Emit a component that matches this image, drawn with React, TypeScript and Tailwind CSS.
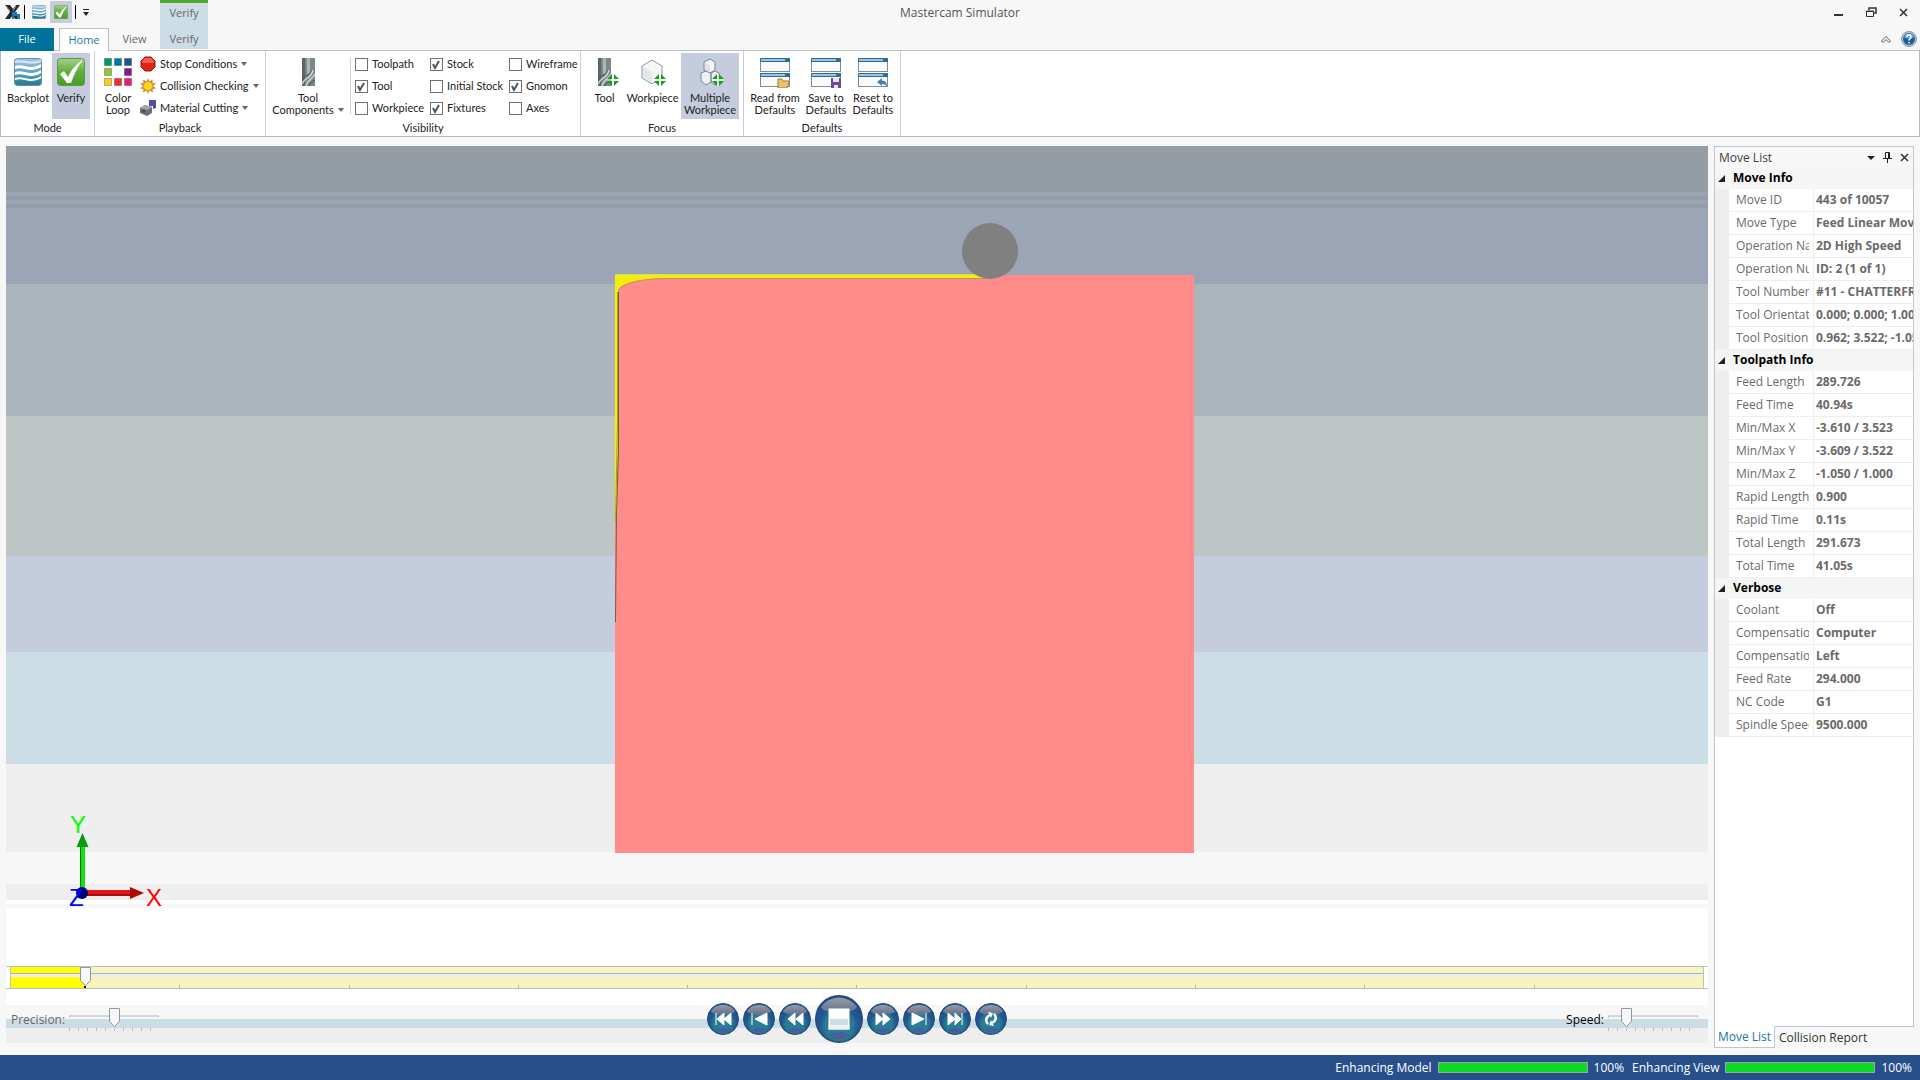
import { useState } from "react";
import type { ReactNode } from "react";

interface Property {
  name: string;
  value: string;
}

interface PropertyGroup {
  title: string;
  rows: Property[];
}

const groups: PropertyGroup[] = [
  {
    title: "Move Info",
    rows: [
      { name: "Move ID", value: "443 of 10057" },
      { name: "Move Type", value: "Feed Linear Move" },
      { name: "Operation Name", value: "2D High Speed" },
      { name: "Operation Number", value: "ID: 2 (1 of 1)" },
      { name: "Tool Number", value: "#11 - CHATTERFREE" },
      { name: "Tool Orientation", value: "0.000; 0.000; 1.000" },
      { name: "Tool Position", value: "0.962; 3.522; -1.050" },
    ],
  },
  {
    title: "Toolpath Info",
    rows: [
      { name: "Feed Length", value: "289.726" },
      { name: "Feed Time", value: "40.94s" },
      { name: "Min/Max X", value: "-3.610 / 3.523" },
      { name: "Min/Max Y", value: "-3.609 / 3.522" },
      { name: "Min/Max Z", value: "-1.050 / 1.000" },
      { name: "Rapid Length", value: "0.900" },
      { name: "Rapid Time", value: "0.11s" },
      { name: "Total Length", value: "291.673" },
      { name: "Total Time", value: "41.05s" },
    ],
  },
  {
    title: "Verbose",
    rows: [
      { name: "Coolant", value: "Off" },
      { name: "Compensation Type", value: "Computer" },
      { name: "Compensation Side", value: "Left" },
      { name: "Feed Rate", value: "294.000" },
      { name: "NC Code", value: "G1" },
      { name: "Spindle Speed", value: "9500.000" },
    ],
  },
];

const visibility = [
  { label: "Toolpath", on: false },
  { label: "Stock", on: true },
  { label: "Wireframe", on: false },
  { label: "Tool", on: true },
  { label: "Initial Stock", on: false },
  { label: "Gnomon", on: true },
  { label: "Workpiece", on: false },
  { label: "Fixtures", on: true },
  { label: "Axes", on: false },
];

// [top, height, color] of each strip behind the model
const bands: [number, number, string][] = [
  [0, 46, "#949ca4"],
  [46, 4, "#9ca5b5"],
  [50, 4, "#949ca4"],
  [54, 4, "#9ca5b5"],
  [58, 4, "#949ca4"],
  [62, 76, "#9ca5b5"],
  [138, 132, "#adb5bc"],
  [270, 140, "#bdc5c5"],
  [410, 96, "#c5ccdd"],
  [506, 112, "#cddde5"],
  [618, 88, "#eeeeee"],
  [706, 32, "#f7f7f7"],
  [738, 16, "#eeeeee"],
  [754, 4, "#ffffff"],
  [758, 4, "#f7f7f7"],
  [762, 97, "#ffffff"],
  [859, 14, "#f7f7f7"],
  [873, 9, "#cddde5"],
  [882, 15, "#eeeeee"],
];

const TOTAL_MOVES = 10057;

// ---------------- Icons ----------------

function Caret() {
  return (
    <svg width="6" height="4" viewBox="0 0 6 4" className="shrink-0">
      <path d="M0 0h6L3 4z" fill="#666" />
    </svg>
  );
}

function BackplotIcon({ className }: { className: string }) {
  return (
    <svg viewBox="0 0 28 28" className={className}>
      <defs>
        <linearGradient id="backplot" x1="0" y1="0" x2="0" y2="1">
          <stop offset="0" stopColor="#a9c4ea" />
          <stop offset="0.5" stopColor="#5aa5bd" />
          <stop offset="1" stopColor="#22788f" />
        </linearGradient>
      </defs>
      <rect x="0.5" y="0.5" width="27" height="27" rx="3" fill="url(#backplot)" stroke="#6b8fa8" />
      <path d="M1 8c8-3 15 5 26-2v3c-11 7-18-1-26 2z" fill="#fff" />
      <path d="M1 14c8-3 15 5 26-2v3c-11 7-18-1-26 2z" fill="#fff" />
      <path d="M1 20c8-3 15 5 26-2v2c-11 7-18-1-26 2z" fill="#fff" />
      <path d="M1 3c8-2 15 3 26-1v2c-11 4-18-1-26 1z" fill="#dbe7f7" />
    </svg>
  );
}

function VerifyIcon({ className }: { className: string }) {
  return (
    <svg viewBox="0 0 28 28" className={className}>
      <defs>
        <linearGradient id="verify" x1="0" y1="0" x2="0" y2="1">
          <stop offset="0" stopColor="#a5cf8e" />
          <stop offset="0.5" stopColor="#5fae3c" />
          <stop offset="1" stopColor="#4a9c27" />
        </linearGradient>
      </defs>
      <rect x="0.5" y="0.5" width="27" height="27" rx="3" fill="url(#verify)" stroke="#5b9a45" />
      <path d="M3 16l4-3 4 6C14 12 19 6 26 2c-5 6-9 14-12 23h-4z" fill="#fff" />
    </svg>
  );
}

function ColorLoopIcon() {
  const cells = [
    [0, 0, "#009a5b"],
    [10, 0, "#0078a8"],
    [20, 0, "#1f4f96"],
    [0, 10, "#8cc63f"],
    [20, 10, "#85168c"],
    [0, 20, "#f5cf1d"],
    [10, 20, "#ec2e2e"],
    [20, 20, "#ea1a70"],
  ] as const;
  return (
    <svg viewBox="0 0 28 28" className="size-7">
      {cells.map(([x, y, fill]) => (
        <rect key={fill} x={x + 0.5} y={y + 0.5} width="7" height="7" fill={fill} stroke="#000" strokeOpacity="0.25" />
      ))}
    </svg>
  );
}

function StopIcon() {
  return (
    <svg viewBox="0 0 16 16" className="size-4">
      <path d="M5 1h6l4 4v6l-4 4H5l-4-4V5z" fill="#e02313" stroke="#8e1f14" />
      <path d="M5 2h6l3 3v2H2V5z" fill="#f0604c" />
    </svg>
  );
}

function CollisionIcon() {
  return (
    <svg viewBox="0 0 16 16" className="size-4">
      <path
        d="M8 0l1.500 3.600L12.500 1.500l0 3.500L16 5.500 13 8l3 2.500-3.500.5.500 3.500-3.500-2L8 16l-1.500-3.500-3.500 2 .5-3.500L0 10.500 3 8 0 5.500l3.500-.5L3 1.500l3.500 2.100z"
        fill="#c08a4a"
      />
      <circle cx="8" cy="8" r="4.500" fill="#fcd716" stroke="#f09b1b" />
    </svg>
  );
}

function MaterialIcon() {
  return (
    <svg viewBox="0 0 16 16" className="size-4">
      <path d="M0 8l5-3 7 2v6l-5 3-7-3z" fill="#6b7072" />
      <path d="M0 8l5-3 7 2-5 3z" fill="#a3a8aa" />
      <circle cx="4" cy="11" r="1.500" fill="#44494b" />
      <path d="M9 0h7v8l-3 1V6H9z" fill="#514f9b" />
    </svg>
  );
}

function EndMill() {
  return (
    <>
      <rect x="0" y="0" width="13" height="28" fill="#7d8788" />
      <rect x="0" y="0" width="3" height="28" fill="#5b6567" />
      <rect x="5" y="0" width="3" height="16" fill="#adb6b6" />
      <path d="M0 26C3 18 9 22 11 12M4 28c2-7 6-6 9-12" fill="none" stroke="#ccd4d4" strokeWidth="1.500" />
      <path d="M0 21c3-4 7-3 9-8M7 28c1-3 3-4 6-6" fill="none" stroke="#465052" />
    </>
  );
}

function FocusMark() {
  return (
    <g transform="translate(9 16)">
      <path d="M5 0v5H0zM7 0v5h5zM0 7h5v5zM7 7h5l-5 5z" fill="#1d9a1a" />
      <path d="M6 0v12M0 6h12" stroke="#fff" />
    </g>
  );
}

function ToolComponentsIcon() {
  return (
    <svg viewBox="0 0 28 28" className="size-7">
      <g transform="translate(8 0)">
        <EndMill />
      </g>
    </svg>
  );
}

function FocusToolIcon() {
  return (
    <svg viewBox="0 0 28 28" className="size-7">
      <g transform="translate(7 0)">
        <EndMill />
        <FocusMark />
      </g>
    </svg>
  );
}

function WorkpieceIcon() {
  return (
    <svg viewBox="0 0 28 28" className="size-7">
      <path d="M3 8l10-6 10 6v12l-10 6-10-6z" fill="#f5f6f8" stroke="#8a96a5" />
      <path d="M4 9l9 5v11l-9-5z" fill="#e4e6ea" />
      <g transform="translate(6 0)">
        <FocusMark />
      </g>
    </svg>
  );
}

function MultipleIcon() {
  return (
    <svg viewBox="0 0 28 28" className="size-7">
      <path d="M5 15l5-2 5 2v9l-5 3-5-4zM15 15l4-2 4 2v9l-4 3-4-3z" fill="#eef0f3" stroke="#7b8797" />
      <path d="M8 4l6-3 5 3v8l-5 3-6-3z" fill="#f3f4f6" stroke="#7b8797" />
      <path d="M9 5l5 2v7l-5-2z" fill="#dfe2e7" />
      <g transform="translate(7 0)">
        <FocusMark />
      </g>
    </svg>
  );
}

function DefaultsIcon({ children }: { children: ReactNode }) {
  return (
    <svg viewBox="0 0 30 30" className="h-[30px] w-[30px] shrink-0">
      {[0, 15].map((y) => (
        <g key={y}>
          <rect x="0.5" y={y + 0.5} width="29" height="13" fill="#fafafa" stroke="#7f8c92" />
          <rect x="0" y={y} width="30" height="4" fill="#2c6f94" />
          <rect x="1" y={y + 1} width="24" height="2" fill="#9fc0ee" />
        </g>
      ))}
      {children}
    </svg>
  );
}

function AppLogo() {
  return (
    <svg viewBox="0 0 16 16" className="size-4">
      <path d="M0 1h5l3 4 3-4h4l-5 7 5 7h-5l-2-4-3 4H0l5-7z" fill="#23282b" />
      <path d="M1 2l4 5M11 2L8 7" stroke="#9aa4a8" />
      <path d="M7 8h5v2h3v5h-3v-3H9v3H7z" fill="#2378a8" />
    </svg>
  );
}

// ---------------- Ribbon parts ----------------

interface LargeButtonProps {
  icon: ReactNode;
  lines: string[];
  width: string;
  active?: boolean;
  menu?: boolean;
}

function LargeButton({ icon, lines, width, active, menu }: LargeButtonProps) {
  return (
    <button
      className={`flex h-[66px] shrink-0 flex-col items-center pt-[5px] leading-3 ${width} ${
        active ? "bg-[#c5ccdd]" : "hover:bg-[#e3e7ef]"
      }`}
    >
      <span className="mb-1.5 flex h-7 justify-center">{icon}</span>
      {lines.map((line, i) => (
        <span key={line} className="flex items-center gap-1 whitespace-nowrap">
          {line}
          {menu && i === lines.length - 1 && <Caret />}
        </span>
      ))}
    </button>
  );
}

function SmallButton({ icon, label }: { icon: ReactNode; label: string }) {
  return (
    <button className="flex h-[22px] items-center gap-1 whitespace-nowrap hover:bg-[#e3e7ef]">
      {icon}
      <span>{label}</span>
      <Caret />
    </button>
  );
}

function RibbonGroup({ title, width, children }: { title: string; width: string; children: ReactNode }) {
  return (
    <div className={`flex shrink-0 flex-col border-r border-[#c5ccdd] pt-0.5 ${width}`}>
      <div className="flex h-[66px] pl-1">{children}</div>
      <div className="h-[17px] text-center leading-[17px]">{title}</div>
    </div>
  );
}

function Check({ label, on }: { label: string; on: boolean }) {
  return (
    <label className="flex h-[22px] items-center gap-1 whitespace-nowrap">
      <span className="grid size-[13px] shrink-0">
        <input
          type="checkbox"
          defaultChecked={on}
          className="peer col-start-1 row-start-1 size-[13px] appearance-none border border-[#707070] bg-white"
        />
        <svg
          viewBox="0 0 13 13"
          className="pointer-events-none invisible col-start-1 row-start-1 size-[13px] peer-checked:visible"
        >
          <path d="M3 6l2 4 4-7" fill="none" stroke="#4d5654" strokeWidth="2" />
        </svg>
      </span>
      {label}
    </label>
  );
}

// ---------------- Sliders ----------------

function Thumb() {
  return (
    <svg width="11" height="19" viewBox="0 0 11 19">
      <path d="M0.500 0.500h10v13l-5 5-5-5z" fill="#f7f7f7" stroke="#8d979c" />
    </svg>
  );
}

interface SmallSliderProps {
  id: string;
  label: string;
  initial: number;
  color: string;
}

function SmallSlider({ id, label, initial, color }: SmallSliderProps) {
  const [value, setValue] = useState(initial);

  return (
    <div className={`flex items-center gap-1 pt-0.5 ${color}`}>
      <label htmlFor={id}>{label}</label>
      <div className="relative h-6 w-[90px]">
        <svg viewBox="0 0 90 24" className="size-full">
          <path d="M0 10V8h90v2" fill="none" stroke="#adb5bc" />
          {Array.from({ length: 11 }, (_, i) => (
            <path key={i} d={`M${i * 9 + 0.5} 19v4`} stroke="#b9c2c8" />
          ))}
        </svg>
        <div className="absolute top-0 -ml-[5px]" style={{ left: `${value * 10}%` }}>
          <Thumb />
        </div>
        <input
          id={id}
          type="range"
          min={0}
          max={10}
          value={value}
          onChange={(e) => setValue(Number(e.target.value))}
          className="absolute inset-0 w-full opacity-0"
        />
      </div>
    </div>
  );
}

function Timeline() {
  const [move, setMove] = useState(443);
  const done = (move / TOTAL_MOVES) * 100;

  return (
    <div className="relative h-[23px] border-y border-[#b8c0c4] bg-white px-1">
      <div className="relative h-full border-x border-[#c9c1a5] bg-[#f7f5bd]">
        <div className="h-full bg-[#ffff00]" style={{ width: `${done}%` }} />
        <div className="absolute inset-x-0 top-1.5 h-1 border-t border-[#adb5bc] bg-[#eeeeee]" />
        <div className="absolute inset-x-0 bottom-0 flex h-[3px]">
          {Array.from({ length: 10 }, (_, i) => (
            <span key={i} className="flex-1 border-l border-[#b5b5a5] first:border-0" />
          ))}
        </div>
        <div className="absolute top-0 -ml-1.5 flex flex-col items-center" style={{ left: `${done}%` }}>
          <Thumb />
          <span className="h-0.5 w-0.5 bg-black" />
        </div>
        <input
          type="range"
          aria-label="Move"
          min={0}
          max={TOTAL_MOVES}
          value={move}
          onChange={(e) => setMove(Number(e.target.value))}
          className="absolute inset-0 w-full opacity-0"
        />
      </div>
    </div>
  );
}

// ---------------- Playback ----------------

const transport = [
  { label: "Go to start", d: "M9 10v12M17 10l-7 6 7 6zM24 10l-7 6 7 6z" },
  { label: "Step back", d: "M9 10v12M24 10l-12 6 12 6z" },
  { label: "Rewind", d: "M16 10l-7 6 7 6zM24 10l-7 6 7 6z" },
  { label: "Stop", d: "" },
  { label: "Fast forward", d: "M9 10l7 6-7 6zM16 10l7 6-7 6z" },
  { label: "Step forward", d: "M23 10v12M9 10l12 6-12 6z" },
  { label: "Go to end", d: "M23 10v12M9 10l7 6-7 6zM16 10l6 6-6 6z" },
  { label: "Loop", d: "loop" },
];

function TransportButton({ label, d }: { label: string; d: string }) {
  const stop = label === "Stop";
  return (
    <button aria-label={label} className={`shrink-0 rounded-full ${stop ? "size-12" : "size-8"}`}>
      <svg viewBox="0 0 32 32" className="size-full">
        <defs>
          <radialGradient id="orb" cx="0.5" cy="0.65" r="0.55">
            <stop offset="0" stopColor="#27829a" />
            <stop offset="0.55" stopColor="#297b90" />
            <stop offset="0.75" stopColor="#22588f" />
            <stop offset="1" stopColor="#1c4f91" />
          </radialGradient>
          <linearGradient id="gloss" x1="0" y1="0" x2="0" y2="1">
            <stop offset="0" stopColor="#949ca4" />
            <stop offset="1" stopColor="#63708c" />
          </linearGradient>
        </defs>
        <circle cx="16" cy="16" r="15.500" fill="url(#orb)" stroke="#244b7c" />
        <path d="M4 8A14.500 14.500 0 0 1 28 8C26 13 6 13 4 8z" fill="url(#gloss)" />
        <path d="M9 27c4-3 10-3 14 0-4 3-10 3-14 0z" fill="#4a5c9c" />
        {stop && (
          <>
            <rect x="9" y="9" width="14" height="14" fill="#fff" />
            <rect x="10" y="16" width="12" height="4" fill="#cddde5" />
            <rect x="9" y="20" width="14" height="3" fill="#f0f0f0" />
          </>
        )}
        {d === "loop" && (
          <>
            <path d="M13 21c-3-3-2-7 2-9M19 11c3 3 2 7-2 9" fill="none" stroke="#fff" strokeWidth="2.500" />
            <path d="M13 9l5 1-2 5zM19 23l-5-1 2-5z" fill="#fff" />
          </>
        )}
        {!stop && d !== "loop" && <path d={d} fill="#fff" stroke="#fff" />}
      </svg>
    </button>
  );
}

// ---------------- Viewport ----------------

function Model() {
  return (
    <svg viewBox="0 0 1702 820" className="absolute inset-0 size-full">
      <rect x="609" y="129" width="579" height="578" fill="#ff8b8b" />
      {/* material still to be removed */}
      <path d="M609 128h376v4H660C632 133 613 137 612 145v150l-2 80h-1z" fill="#f2ee0a" />
      <path d="M609 128.500h376" stroke="#cfd884" />
      <path d="M985 132.500H660C634 133 616 137 613 145" fill="none" stroke="#b89a50" />
      <path d="M612.500 146v160l-2 60-1 110" fill="none" stroke="#7b5a30" />
      <path d="M611.500 146v130l-2 100" fill="none" stroke="#a9a305" />
      <circle cx="984" cy="105" r="28" fill="#808080" />
    </svg>
  );
}

function Gnomon() {
  return (
    <svg width="110" height="100" viewBox="0 0 110 100" className="absolute bottom-14 left-[58px]">
      <rect x="16" y="34" width="5" height="48" fill="#14e014" />
      <rect x="16" y="34" width="1" height="48" fill="#0a7a0a" />
      <path d="M18.500 23l6 14h-12z" fill="#0b9a0b" />
      <rect x="18" y="80" width="50" height="6" fill="#e01515" />
      <rect x="18" y="84" width="50" height="2" fill="#a80d0d" />
      <path d="M80 83l-14 6V77z" fill="#b30808" />
      <circle cx="18" cy="83" r="6" fill="#00007a" />
      <g fontFamily="Liberation Sans, sans-serif" fontSize="24">
        <text x="6" y="23" fill="#00ff00">Y</text>
        <text x="82" y="96" fill="#ff0000">X</text>
        <text x="5" y="96" fill="#0000ff">Z</text>
      </g>
    </svg>
  );
}

function Viewport() {
  return (
    <section className="relative flex min-w-0 flex-1 flex-col">
      <svg
        viewBox="0 0 100 897"
        preserveAspectRatio="none"
        shapeRendering="crispEdges"
        className="absolute inset-0 size-full"
      >
        {bands.map(([y, h, fill]) => (
          <rect key={y} y={y} width="100" height={h} fill={fill} />
        ))}
      </svg>
      <div className="relative min-h-80 flex-1">
        <Model />
        <Gnomon />
      </div>
      <Timeline />
      <div className="relative grid h-[54px] grid-cols-[1fr_auto_1fr] items-center pt-1.5 text-xs">
        <div className="pl-[5px]">
          <SmallSlider id="precision" label="Precision:" initial={5} color="text-[#666]" />
        </div>
        <div className="flex items-center gap-1">
          {transport.map((t) => (
            <TransportButton key={t.label} {...t} />
          ))}
        </div>
        <div className="flex justify-end pr-2.5">
          <SmallSlider id="speed" label="Speed:" initial={2} color="text-black" />
        </div>
      </div>
    </section>
  );
}

// ---------------- Move list ----------------

function MoveList() {
  return (
    <aside className="flex w-[200px] shrink-0 flex-col text-xs">
      <div className="flex-1 border border-b-0 border-[#bcc8d0] bg-white">
        <div className="flex h-[21px] items-center bg-[#f7f7f7] px-1 text-[#444]">
          <h2 className="flex-1">Move List</h2>
          <button aria-label="Window position" className="mr-2">
            <svg width="8" height="4" viewBox="0 0 8 4">
              <path d="M0 0h8L4 4z" fill="#222" />
            </svg>
          </button>
          <button aria-label="Auto hide" className="mr-2">
            <svg width="9" height="11" viewBox="0 0 9 11" fill="none" stroke="#222">
              <path d="M2.500 6V0.500h4V6M5.500 1v5M0 6.500h9M4.500 7v4" />
            </svg>
          </button>
          <button aria-label="Close panel">
            <svg width="9" height="9" viewBox="0 0 9 9">
              <path d="M1 1l7 7M8 1L1 8" stroke="#333" strokeWidth="1.500" />
            </svg>
          </button>
        </div>
        <table className="w-full table-fixed border-separate border-spacing-0">
          <colgroup>
            <col className="w-3.5" />
            <col className="w-[85px]" />
            <col />
          </colgroup>
          {groups.map((group) => (
            <tbody key={group.title}>
              <tr className="h-[21px] bg-[#f5f5f5]">
                <th colSpan={3} className="p-0 text-left align-top font-bold text-black">
                  <span className="flex items-center gap-2 pl-[3px] leading-5">
                    <svg width="7" height="7" viewBox="0 0 7 7">
                      <path d="M7 0v7H0z" fill="#222" />
                    </svg>
                    {group.title}
                  </span>
                </th>
              </tr>
              {group.rows.map((row, i) => (
                <tr key={i} className="h-[23px] text-[#6a6a6a]">
                  <td className="bg-[#eeeeee] p-0" />
                  <th
                    scope="row"
                    className="border-r border-b border-[#eeeeee] p-0 pr-1 pl-[7px] text-left font-normal"
                  >
                    <span className="block overflow-hidden whitespace-nowrap">{row.name}</span>
                  </th>
                  <td className="border-b border-[#eeeeee] p-0 pl-0.5 font-bold">
                    <span className="block overflow-hidden whitespace-nowrap">{row.value}</span>
                  </td>
                </tr>
              ))}
            </tbody>
          ))}
        </table>
      </div>
      <div className="flex h-[22px] leading-[22px]">
        <button className="h-full w-[61px] border border-t-0 border-[#bcc8d0] bg-white whitespace-nowrap text-[#1778a0]">
          Move List
        </button>
        <button className="flex-1 border-t border-[#bcc8d0] pl-1 text-left text-[#333]">Collision Report</button>
      </div>
    </aside>
  );
}

function Progress({ label }: { label: string }) {
  return (
    <div className="flex items-center gap-1.5">
      <span>{label}</span>
      <div
        role="progressbar"
        aria-label={label}
        aria-valuenow={100}
        className="h-[11px] w-[150px] border border-[#a3a3a3] bg-[#0cd926]"
      />
      <span>100%</span>
    </div>
  );
}

export default function App() {
  return (
    <div className="flex min-h-screen flex-col bg-[#f7f7f7] font-['Open_Sans','Noto_Sans',sans-serif] text-[11px] text-[#333]">
      {/* title bar */}
      <header className="grid h-7 grid-cols-[1fr_auto_1fr]">
        <div className="flex">
          <div className="flex w-40 items-start pt-px pl-[5px]">
            <span className="flex h-[22px] items-center">
              <AppLogo />
            </span>
            <span className="mx-[3px] mt-1 h-3.5 w-px bg-black" />
            <button aria-label="Backplot" className="flex size-[22px] items-center justify-center">
              <BackplotIcon className="size-3.5" />
            </button>
            <button aria-label="Verify" className="flex size-[22px] items-center justify-center bg-[#c5ccdd]">
              <VerifyIcon className="size-3.5" />
            </button>
            <span className="mx-[3px] mt-1 h-3.5 w-px bg-black" />
            <button aria-label="Customize toolbar" className="mt-2 ml-1">
              <svg width="6" height="7" viewBox="0 0 6 7">
                <path d="M0 0.500h6" stroke="#222" />
                <path d="M0 3h6L3 7z" fill="#222" />
              </svg>
            </button>
          </div>
          <div className="w-12 border-t-3 border-[#52a52f] bg-[#cddde5] text-center leading-5 text-[#666]">
            Verify
          </div>
        </div>
        <h1 className="text-xs leading-[26px] text-[#555]">Mastercam Simulator</h1>
        <div className="flex h-6 items-center justify-end gap-[22px] pr-3">
          <button aria-label="Minimize">
            <svg width="10" height="10" viewBox="0 0 10 10">
              <path d="M0 8h9" stroke="#333" strokeWidth="2" />
            </svg>
          </button>
          <button aria-label="Restore">
            <svg width="11" height="10" viewBox="0 0 11 10" fill="none" stroke="#333">
              <path d="M3 3V1h7v5H8" strokeWidth="1.500" />
              <path d="M0.500 4h7v5.500h-7zM0 4.500h8" />
            </svg>
          </button>
          <button aria-label="Close">
            <svg width="9" height="9" viewBox="0 0 9 9">
              <path d="M1 1l7 7M8 1L1 8" stroke="#333" strokeWidth="1.500" />
            </svg>
          </button>
        </div>
      </header>

      {/* tabs */}
      <nav className="flex h-[23px] border-b border-[#c0c0c0]">
        <button className="h-[23px] w-[54px] bg-[#00739c] text-white">File</button>
        <button className="ml-[5px] h-[23px] w-[50px] border border-b-0 border-[#c0c0c0] bg-white text-[#1778a0]">
          Home
        </button>
        <button className="w-[51px] text-[#666]">View</button>
        <button className="h-[21px] w-12 bg-[#cddde5] pt-0.5 text-[#666]">Verify</button>
        <div className="flex flex-1 items-center justify-end gap-2.5 pr-[3px]">
          <button aria-label="Collapse ribbon">
            <svg width="10" height="7" viewBox="0 0 10 7">
              <path d="M0.500 5L5 0.500 9.500 5 8 6.500l-3-3-3 3z" fill="#fff" stroke="#555" />
            </svg>
          </button>
          <button aria-label="Help">
            <svg width="16" height="16" viewBox="0 0 16 16">
              <circle cx="8" cy="8" r="7.500" fill="#b9cbdb" stroke="#8097ad" />
              <circle cx="8" cy="8" r="6" fill="#1d5f9c" />
              <path d="M3 6a5.500 5.500 0 0 1 10 0c-3 2-7 2-10 0z" fill="#7aa6cf" />
              <path d="M6 6c0-3 4-3 4 0 0 1.500-2 1.500-2 3.500M8 11v1.500" fill="none" stroke="#fff" strokeWidth="1.500" />
            </svg>
          </button>
        </div>
      </nav>

      {/* ribbon */}
      <div className="flex h-[86px] border border-t-0 border-[#adb9c4] bg-white font-['Lato','Open_Sans',sans-serif] text-[#222]">
        <RibbonGroup title="Mode" width="w-[94px]">
          <LargeButton icon={<BackplotIcon className="size-7" />} lines={["Backplot"]} width="mr-px w-[46px]" />
          <LargeButton icon={<VerifyIcon className="size-7" />} lines={["Verify"]} width="w-[38px]" active />
        </RibbonGroup>
        <RibbonGroup title="Playback" width="w-[171px]">
          <LargeButton icon={<ColorLoopIcon />} lines={["Color", "Loop"]} width="w-[38px]" />
          <div className="ml-[3px] flex flex-col items-start">
            <SmallButton icon={<StopIcon />} label="Stop Conditions" />
            <SmallButton icon={<CollisionIcon />} label="Collision Checking" />
            <SmallButton icon={<MaterialIcon />} label="Material Cutting" />
          </div>
        </RibbonGroup>
        <RibbonGroup title="Visibility" width="w-[315px]">
          <LargeButton icon={<ToolComponentsIcon />} lines={["Tool", "Components"]} width="w-[76px]" menu />
          <div className="mt-[5px] mr-1 ml-1 h-14 w-px bg-[#c5ccdd]" />
          <div className="grid grid-cols-[75px_79px_auto]">
            {visibility.map((v) => (
              <Check key={v.label} {...v} />
            ))}
          </div>
        </RibbonGroup>
        <RibbonGroup title="Focus" width="w-[163px]">
          <LargeButton icon={<FocusToolIcon />} lines={["Tool"]} width="mr-px w-[39px]" />
          <LargeButton icon={<WorkpieceIcon />} lines={["Workpiece"]} width="mr-px w-[55px]" />
          <LargeButton icon={<MultipleIcon />} lines={["Multiple", "Workpiece"]} width="w-[58px]" active />
        </RibbonGroup>
        <RibbonGroup title="Defaults" width="w-[157px]">
          <LargeButton
            icon={
              <DefaultsIcon>
                <path d="M18 21h4l1 2h6v2l-2 5h-9z" fill="#e9c56a" stroke="#a57a2a" />
              </DefaultsIcon>
            }
            lines={["Read from", "Defaults"]}
            width="w-[54px]"
          />
          <LargeButton
            icon={
              <DefaultsIcon>
                <rect x="20" y="20" width="10" height="10" fill="#6b4a96" />
                <path d="M22 20h6v4h-6zM23 27h4v3h-4z" fill="#e8e2f0" />
              </DefaultsIcon>
            }
            lines={["Save to", "Defaults"]}
            width="w-[48px]"
          />
          <LargeButton
            icon={
              <DefaultsIcon>
                <path d="M19 24l5-4v2.500c4 0 5 3 5 6.500-1-2-2-3-5-3V28z" fill="#4b7fa3" />
              </DefaultsIcon>
            }
            lines={["Reset to", "Defaults"]}
            width="w-[46px]"
          />
        </RibbonGroup>
      </div>

      {/* workspace */}
      <main className="flex flex-1 gap-1.5 px-1.5 pt-[9px]">
        <div className="flex min-w-0 flex-1 pb-3">
          <Viewport />
        </div>
        <div className="flex pb-[7px]">
          <MoveList />
        </div>
      </main>

      <footer className="flex h-[25px] items-center justify-end gap-2 bg-[#27508b] pr-2 text-xs text-white">
        <Progress label="Enhancing Model" />
        <Progress label="Enhancing View" />
      </footer>
    </div>
  );
}
